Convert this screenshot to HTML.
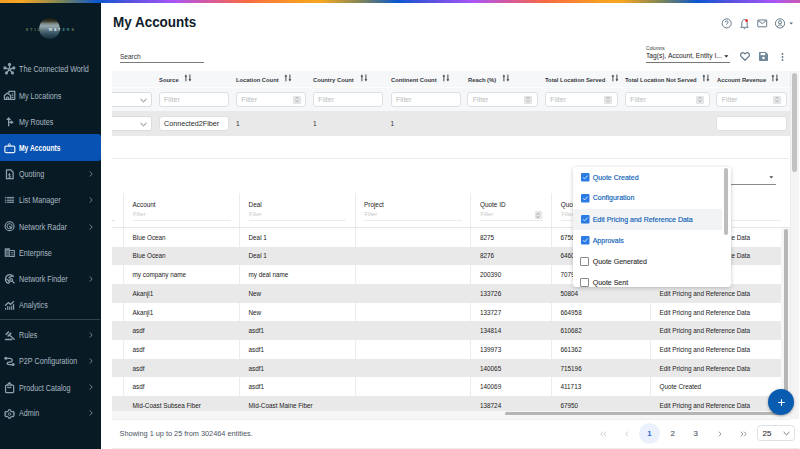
<!DOCTYPE html>
<html><head><meta charset="utf-8">
<style>
*{box-sizing:border-box;margin:0;padding:0}
html,body{width:800px;height:449px;overflow:hidden;background:#fff;font-family:"Liberation Sans",sans-serif;position:relative}
.a{position:absolute}
.t{position:absolute;white-space:nowrap}
svg{display:block;overflow:visible}
#topbar{left:0;top:0;width:800px;height:3px;background:repeating-linear-gradient(90deg,#f79e20 0px,#f5a623 22px,#7a8458 62px,#0b57cf 97px,#5a52e0 132px,#a855f7 172px,#d65a9c 210px,#f76a44 245px,#fb8c2c 282px,#f79e20 300px)}
#side{left:0;top:3px;width:101px;height:446px;background:#081b25}
.nav{position:absolute;left:0;width:101px;height:26.4px;color:#a9b8c2;font-size:8.4px;line-height:26.4px}
.nav .lbl{position:absolute;left:19.2px;top:0.7px;white-space:nowrap;transform:scaleX(0.858);transform-origin:0 50%}
.nav .ic{position:absolute;left:0;width:20px;height:20px;color:#8ca1ae}
.nav .chev{position:absolute;left:88.8px;top:10.4px;width:4px;height:6px;color:#8a9ba6}
.nav.act{background:#0752b2;border-radius:0 3px 3px 0;color:#fff}
.nav.act .ic{color:#e8eef6}
.nav.act .lbl{font-weight:700;transform:scaleX(0.80)}
</style></head><body>
<div id="side" class="a">
<div class="a" style="left:38.8px;top:14.9px;width:21px;height:21px;border-radius:50%;background:linear-gradient(180deg,#15190f 0%,#3a3726 15%,#76827e 26%,#96a8b0 37%,#7a8f99 50%,#4a6573 64%,#2b4654 82%,#1a3240 100%)"></div>
<div class="a" style="left:25.8px;top:24.6px;width:60px;font-size:3.6px;line-height:5px;letter-spacing:2.0px;color:#6f7b52;white-space:nowrap;font-weight:700">STILL <span style="color:#dce6ea">WAT</span><span style="color:#3f8f94">ER</span><span style="color:#7b8458">S</span></div>
<div class="nav" style="top:52.8px"><svg class="ic" style="top:4.20px" width="20" height="20" viewBox="0 0 449 449"><g stroke="currentColor" stroke-width="30" fill="none"><path d="M213 210L213 100M213 210L110 178M213 210L310 178M213 210L145 290M213 210L280 290"/></g><g fill="currentColor"><circle cx="213" cy="100" r="36"/><circle cx="110" cy="178" r="36"/><circle cx="310" cy="178" r="36"/><circle cx="145" cy="290" r="36"/><circle cx="280" cy="290" r="36"/><circle cx="213" cy="210" r="30"/></g><circle cx="213" cy="210" r="11" fill="#081b25"/></svg><span class="lbl">The Connected World</span></div>
<div class="nav" style="top:79.4px"><svg class="ic" style="top:3.60px" width="20" height="20" viewBox="0 0 449 449"><g stroke="currentColor" stroke-width="28" fill="none" stroke-linejoin="round"><path d="M98 300V215L168 158L238 215V300Z"/><path d="M200 160V122H332V300H238"/><path d="M145 300V262C145 245 192 245 192 262V300"/><path d="M262 178H300M262 218H300M262 258H300" stroke-width="24"/></g></svg><span class="lbl">My Locations</span></div>
<div class="nav" style="top:105.2px"><svg class="ic" style="top:3.80px" width="20" height="20" viewBox="0 0 449 449"><g fill="currentColor"><path d="M180 320V170H210V320Z"/><path d="M138 182L195 112L252 182Z"/><path d="M205 215H245V185L308 230L245 275V245H205Z"/></g></svg><span class="lbl">My Routes</span></div>
<div class="nav act" style="top:131.4px"><svg class="ic" style="top:3.60px" width="20" height="20" viewBox="0 0 449 449"><g stroke="currentColor" fill="none"><rect x="110" y="182" width="222" height="146" rx="26" stroke-width="28"/><circle cx="210" cy="152" r="24" stroke-width="22"/><path d="M165 250V290M245 240L270 270" stroke-width="14" opacity="0.4"/></g></svg><span class="lbl">My Accounts</span></div>
<div class="nav" style="top:157.8px"><svg class="ic" style="top:3.20px" width="20" height="20" viewBox="0 0 449 449"><g stroke="currentColor" fill="none" stroke-width="28" stroke-linejoin="round"><path d="M145 130H240L295 185V330H145Z"/><path d="M240 245C232 228 222 222 210 222C195 222 188 232 188 244C188 270 240 258 240 282C240 296 228 304 212 304C200 304 190 298 185 288M213 205V318" stroke-width="18"/></g></svg><span class="lbl">Quoting</span><svg class="chev" viewBox="0 0 4 6" fill="none" stroke="currentColor" stroke-width="0.8"><path d="M0.8 0.5L3.2 3L0.8 5.5"/></svg></div>
<div class="nav" style="top:183.8px"><svg class="ic" style="top:3.20px" width="20" height="20" viewBox="0 0 449 449"><g fill="currentColor"><rect x="110" y="155" width="32" height="22"/><rect x="158" y="155" width="158" height="22"/><rect x="110" y="190" width="32" height="22" opacity="0.8"/><rect x="158" y="190" width="158" height="22" opacity="0.8"/><rect x="110" y="225" width="32" height="22" opacity="0.8"/><rect x="158" y="225" width="158" height="22" opacity="0.8"/><rect x="110" y="262" width="32" height="26"/><rect x="158" y="262" width="158" height="26"/></g></svg><span class="lbl">List Manager</span><svg class="chev" viewBox="0 0 4 6" fill="none" stroke="currentColor" stroke-width="0.8"><path d="M0.8 0.5L3.2 3L0.8 5.5"/></svg></div>
<div class="nav" style="top:210.2px"><svg class="ic" style="top:2.80px" width="20" height="20" viewBox="0 0 449 449"><g stroke="currentColor" fill="none"><circle cx="215" cy="230" r="100" stroke-width="26"/><circle cx="215" cy="230" r="58" stroke-width="22"/><path d="M215 230L262 275" stroke-width="26"/></g><circle cx="213" cy="232" r="14" fill="currentColor"/></svg><span class="lbl">Network Radar</span><svg class="chev" viewBox="0 0 4 6" fill="none" stroke="currentColor" stroke-width="0.8"><path d="M0.8 0.5L3.2 3L0.8 5.5"/></svg></div>
<div class="nav" style="top:236.3px"><svg class="ic" style="top:2.70px" width="20" height="20" viewBox="0 0 449 449"><g fill="currentColor"><path d="M105 140H225V335H105Z" opacity="0.85"/></g><g stroke="#081b25" stroke-width="14"><path d="M135 210H205M135 250H205M135 290H205"/></g><g stroke="currentColor" stroke-width="24" fill="none"><path d="M225 190H322V325H225"/><path d="M240 240H300M240 290H300" stroke-width="18"/></g></svg><span class="lbl">Enterprise</span></div>
<div class="nav" style="top:262.2px"><svg class="ic" style="top:2.80px" width="20" height="20" viewBox="0 0 449 449"><g stroke="currentColor" fill="none" stroke-width="28" stroke-linecap="round"><path d="M300 190A100 100 0 1 0 190 345"/><path d="M145 250C180 260 205 290 210 330M200 220C230 190 260 175 290 185"/><circle cx="250" cy="268" r="32"/><path d="M275 295L318 335"/></g></svg><span class="lbl">Network Finder</span><svg class="chev" viewBox="0 0 4 6" fill="none" stroke="currentColor" stroke-width="0.8"><path d="M0.8 0.5L3.2 3L0.8 5.5"/></svg></div>
<div class="nav" style="top:288.6px"><svg class="ic" style="top:3.40px" width="20" height="20" viewBox="0 0 449 449"><g fill="currentColor"><rect x="112" y="290" width="26" height="42"/><rect x="160" y="250" width="26" height="82"/><rect x="205" y="258" width="26" height="74"/><rect x="250" y="240" width="26" height="92"/><rect x="292" y="205" width="26" height="127"/></g><path d="M112 240L190 170L235 212L312 140" stroke="currentColor" stroke-width="28" fill="none" stroke-linejoin="round"/></svg><span class="lbl">Analytics</span></div>
<div class="nav" style="top:318.4px"><svg class="ic" style="top:3.60px" width="20" height="20" viewBox="0 0 449 449"><g stroke="currentColor" fill="none" stroke-linecap="butt"><path d="M128 218L200 146" stroke-width="36"/><path d="M172 258L252 178" stroke-width="36"/><path d="M210 225L318 322" stroke-width="30" stroke-linecap="round"/><path d="M122 325H264" stroke-width="30" stroke-linecap="round"/></g></svg><span class="lbl">Rules</span><svg class="chev" viewBox="0 0 4 6" fill="none" stroke="currentColor" stroke-width="0.8"><path d="M0.8 0.5L3.2 3L0.8 5.5"/></svg></div>
<div class="nav" style="top:344.8px"><svg class="ic" style="top:4.20px" width="20" height="20" viewBox="0 0 449 449"><g fill="currentColor"><circle cx="132" cy="142" r="34"/><circle cx="295" cy="282" r="34"/></g><path d="M132 142H215C255 142 275 162 275 185C275 208 255 225 220 225H205C175 225 160 240 160 255C160 272 175 285 210 285H290" stroke="currentColor" stroke-width="28" fill="none"/></svg><span class="lbl">P2P Configuration</span><svg class="chev" viewBox="0 0 4 6" fill="none" stroke="currentColor" stroke-width="0.8"><path d="M0.8 0.5L3.2 3L0.8 5.5"/></svg></div>
<div class="nav" style="top:371.0px"><svg class="ic" style="top:4.00px" width="20" height="20" viewBox="0 0 449 449"><g stroke="currentColor" fill="none" stroke-width="28" stroke-linejoin="round"><rect x="125" y="160" width="182" height="168" rx="22"/><path d="M160 160L210 102L260 160"/><path d="M165 200C185 225 235 225 255 200" stroke-width="24"/></g></svg><span class="lbl">Product Catalog</span><svg class="chev" viewBox="0 0 4 6" fill="none" stroke="currentColor" stroke-width="0.8"><path d="M0.8 0.5L3.2 3L0.8 5.5"/></svg></div>
<div class="nav" style="top:396.8px"><svg class="ic" style="top:4.20px" width="20" height="20" viewBox="0 0 449 449"><g transform="translate(214 225) scale(0.86) translate(-214 -225)" stroke="currentColor" fill="none" stroke-width="30" stroke-linejoin="round"><path d="M190 118H238L250 150L283 168L318 158L340 200L316 225L340 252L318 292L283 282L250 300L238 332H190L178 300L145 282L110 292L88 252L112 225L88 200L110 158L145 168L178 150Z"/><circle cx="214" cy="225" r="34" stroke-width="22"/></g></svg><span class="lbl">Admin</span><svg class="chev" viewBox="0 0 4 6" fill="none" stroke="currentColor" stroke-width="0.8"><path d="M0.8 0.5L3.2 3L0.8 5.5"/></svg></div>
<div class="a" style="left:0;top:316px;width:100px;height:1px;background:#34444f"></div>
</div>
<div class="t" style="left:113px;top:8.40px;height:28.8px;line-height:28.8px;font-size:14.4px;color:#0f1d2b;font-weight:700;transform:scaleX(0.935);transform-origin:0 50%">My Accounts</div>
<svg class="a" style="left:0;top:0" width="800" height="40" viewBox="0 0 800 40" fill="none" stroke="#5d7385" stroke-width="0.95">
<circle cx="726.7" cy="23.4" r="4.55"/>
<path d="M725.3 22.2C725.3 21.3 725.9 20.8 726.7 20.8C727.5 20.8 728.1 21.3 728.1 22.1C728.1 23.1 726.8 23.2 726.8 24.3V24.6"/><circle cx="726.8" cy="26.1" r="0.45" fill="#5d7385" stroke="none"/>
<path d="M741.8 26.4V23C741.8 21 742.9 19.6 744.5 19.6C746.1 19.6 747.2 21 747.2 23V26.4L748.3 27.3H740.7Z"/>
<path d="M743.6 28.1C743.8 28.5 744.1 28.7 744.5 28.7C744.9 28.7 745.2 28.5 745.4 28.1" stroke-width="0.8"/>
<circle cx="746.6" cy="20.6" r="1.3" fill="#f01818" stroke="none"/>
<rect x="757.8" y="20" width="8.9" height="6.8" rx="0.5"/>
<path d="M758 20.4L762.25 23.6L766.5 20.4"/>
<circle cx="780" cy="23.4" r="4.6"/>
<circle cx="780" cy="22.3" r="1.55"/>
<path d="M777.2 26.8C777.8 25.6 778.8 25 780 25C781.2 25 782.2 25.6 782.8 26.8"/>
<path d="M789.3 22.4H793.1L791.2 24.4Z" fill="#5d7385" stroke="none"/>
</svg>
<div class="t" style="left:120px;top:50.40px;height:13.6px;line-height:13.6px;font-size:6.8px;color:#333;font-weight:400;transform:scaleX(0.96);transform-origin:0 50%">Search</div>
<div class="a" style="left:120px;top:61.5px;width:84px;height:1px;background:#7a7a7a"></div>
<div class="t" style="left:646px;top:44.10px;height:9.4px;line-height:9.4px;font-size:4.7px;color:#333;font-weight:400;">Columns</div>
<div class="t" style="left:646px;top:48.90px;height:13.4px;line-height:13.4px;font-size:6.7px;color:#222;font-weight:400;">Tag(s), Account, Entity I...</div>
<svg class="a" style="left:724px;top:54.5px" width="5" height="3" viewBox="0 0 5 3"><path d="M0.2 0.2H4.4L2.3 2.6Z" fill="#222"/></svg>
<div class="a" style="left:646px;top:61.5px;width:84px;height:1px;background:#777"></div>
<svg class="a" style="left:739.5px;top:51.5px" width="10" height="9" viewBox="0 0 10 9" fill="none" stroke="#5d7385" stroke-width="1.2"><path d="M5 8.2L1.3 4.6C0.3 3.6 0.4 2 1.4 1.2C2.4 0.4 3.9 0.6 5 1.9C6.1 0.6 7.6 0.4 8.6 1.2C9.6 2 9.7 3.6 8.7 4.6Z"/></svg>
<svg class="a" style="left:759px;top:52.3px" width="9" height="9" viewBox="0 0 9 9"><path d="M0 1C0 0.4 0.4 0 1 0H6.7L9 2.3V8C9 8.6 8.6 9 8 9H1C0.4 9 0 8.6 0 8Z" fill="#6e8799"/><rect x="1.6" y="1" width="4.6" height="2.2" fill="#fff"/><circle cx="4.5" cy="6" r="1.3" fill="#fff"/></svg>
<svg class="a" style="left:781px;top:52.5px" width="3" height="8" viewBox="0 0 3 8" fill="#5d7385"><circle cx="1.5" cy="1" r="0.9"/><circle cx="1.5" cy="4" r="0.9"/><circle cx="1.5" cy="7" r="0.9"/></svg>
<div class="a" style="left:112px;top:71px;width:678px;height:40px;background:#f6f7f9"></div>
<div class="a" style="left:112px;top:87.3px;width:678px;height:0.7px;background:#fdfdfe"></div>
<div class="a" style="left:112px;top:111.3px;width:678px;height:24.3px;background:#e9e9e9"></div>
<div class="a" style="left:112px;top:158px;width:677px;height:1px;background:#ebebeb"></div>
<div class="t" style="left:159px;top:73.90px;height:12.0px;line-height:12.0px;font-size:6.0px;color:#363a41;font-weight:700;transform:scaleX(0.97);transform-origin:0 50%">Source</div>
<svg class="a" style="left:184px;top:73.8px" width="8" height="8" viewBox="0 0 8 8"><path d="M1.9 2V7.3M5.9 0.5V5.8" stroke="#3a3d42" stroke-width="0.95"/><path d="M0.5 2.6L1.9 0.4L3.3 2.6ZM4.5 5.2L5.9 7.4L7.3 5.2Z" fill="#3a3d42"/></svg>
<div class="t" style="left:236px;top:73.90px;height:12.0px;line-height:12.0px;font-size:6.0px;color:#363a41;font-weight:700;transform:scaleX(0.97);transform-origin:0 50%">Location Count</div>
<svg class="a" style="left:284px;top:73.8px" width="8" height="8" viewBox="0 0 8 8"><path d="M1.9 2V7.3M5.9 0.5V5.8" stroke="#3a3d42" stroke-width="0.95"/><path d="M0.5 2.6L1.9 0.4L3.3 2.6ZM4.5 5.2L5.9 7.4L7.3 5.2Z" fill="#3a3d42"/></svg>
<div class="t" style="left:313px;top:73.90px;height:12.0px;line-height:12.0px;font-size:6.0px;color:#363a41;font-weight:700;transform:scaleX(0.97);transform-origin:0 50%">Country Count</div>
<svg class="a" style="left:359.7px;top:73.8px" width="8" height="8" viewBox="0 0 8 8"><path d="M1.9 2V7.3M5.9 0.5V5.8" stroke="#3a3d42" stroke-width="0.95"/><path d="M0.5 2.6L1.9 0.4L3.3 2.6ZM4.5 5.2L5.9 7.4L7.3 5.2Z" fill="#3a3d42"/></svg>
<div class="t" style="left:390.6px;top:73.90px;height:12.0px;line-height:12.0px;font-size:6.0px;color:#363a41;font-weight:700;transform:scaleX(0.97);transform-origin:0 50%">Continent Count</div>
<svg class="a" style="left:442px;top:73.8px" width="8" height="8" viewBox="0 0 8 8"><path d="M1.9 2V7.3M5.9 0.5V5.8" stroke="#3a3d42" stroke-width="0.95"/><path d="M0.5 2.6L1.9 0.4L3.3 2.6ZM4.5 5.2L5.9 7.4L7.3 5.2Z" fill="#3a3d42"/></svg>
<div class="t" style="left:468px;top:73.90px;height:12.0px;line-height:12.0px;font-size:6.0px;color:#363a41;font-weight:700;transform:scaleX(0.97);transform-origin:0 50%">Reach (%)</div>
<svg class="a" style="left:502.3px;top:73.8px" width="8" height="8" viewBox="0 0 8 8"><path d="M1.9 2V7.3M5.9 0.5V5.8" stroke="#3a3d42" stroke-width="0.95"/><path d="M0.5 2.6L1.9 0.4L3.3 2.6ZM4.5 5.2L5.9 7.4L7.3 5.2Z" fill="#3a3d42"/></svg>
<div class="t" style="left:545px;top:73.90px;height:12.0px;line-height:12.0px;font-size:6.0px;color:#363a41;font-weight:700;transform:scaleX(0.97);transform-origin:0 50%">Total Location Served</div>
<svg class="a" style="left:611px;top:73.8px" width="8" height="8" viewBox="0 0 8 8"><path d="M1.9 2V7.3M5.9 0.5V5.8" stroke="#3a3d42" stroke-width="0.95"/><path d="M0.5 2.6L1.9 0.4L3.3 2.6ZM4.5 5.2L5.9 7.4L7.3 5.2Z" fill="#3a3d42"/></svg>
<div class="t" style="left:625px;top:73.90px;height:12.0px;line-height:12.0px;font-size:6.0px;color:#363a41;font-weight:700;transform:scaleX(0.97);transform-origin:0 50%">Total Location Not Served</div>
<svg class="a" style="left:702px;top:73.8px" width="8" height="8" viewBox="0 0 8 8"><path d="M1.9 2V7.3M5.9 0.5V5.8" stroke="#3a3d42" stroke-width="0.95"/><path d="M0.5 2.6L1.9 0.4L3.3 2.6ZM4.5 5.2L5.9 7.4L7.3 5.2Z" fill="#3a3d42"/></svg>
<div class="t" style="left:716.8px;top:73.90px;height:12.0px;line-height:12.0px;font-size:6.0px;color:#363a41;font-weight:700;transform:scaleX(0.97);transform-origin:0 50%">Account Revenue</div>
<svg class="a" style="left:770.5px;top:73.8px" width="8" height="8" viewBox="0 0 8 8"><path d="M1.9 2V7.3M5.9 0.5V5.8" stroke="#3a3d42" stroke-width="0.95"/><path d="M0.5 2.6L1.9 0.4L3.3 2.6ZM4.5 5.2L5.9 7.4L7.3 5.2Z" fill="#3a3d42"/></svg>
<div class="a" style="left:104px;top:92.1px;width:47.5px;height:15.4px;background:#fff;border:0.8px solid #d9dcdf;border-radius:3px"></div>
<svg class="a" style="left:139.5px;top:97.5px" width="7" height="5" viewBox="0 0 7 5" fill="none" stroke="#555" stroke-width="0.8"><path d="M0.6 1L3.5 3.8L6.4 1"/></svg>
<div class="a" style="left:158.7px;top:92.1px;width:70px;height:15.4px;background:#fff;border:0.8px solid #dddfe2;border-radius:3px"></div><div class="t" style="left:164.0px;top:93.00px;height:14.2px;line-height:14.2px;font-size:7.1px;color:#b9bcbf;font-weight:400;">Filter</div>
<div class="a" style="left:236px;top:92.1px;width:70px;height:15.4px;background:#fff;border:0.8px solid #dddfe2;border-radius:3px"></div><div class="t" style="left:241.3px;top:93.00px;height:14.2px;line-height:14.2px;font-size:7.1px;color:#b9bcbf;font-weight:400;">Filter</div><div class="a" style="left:292.5px;top:95.8px;width:8px;height:8px;background:#e3e4e6;border-radius:1px"></div><svg class="a" style="left:293.5px;top:96.3px" width="6" height="7" viewBox="0 0 6 7" fill="none" stroke="#8a8d91" stroke-width="0.6"><path d="M1.5 2.6L3 1.2L4.5 2.6M1.5 4.4L3 5.8L4.5 4.4"/></svg>
<div class="a" style="left:313px;top:92.1px;width:70px;height:15.4px;background:#fff;border:0.8px solid #dddfe2;border-radius:3px"></div><div class="t" style="left:318.3px;top:93.00px;height:14.2px;line-height:14.2px;font-size:7.1px;color:#b9bcbf;font-weight:400;">Filter</div>
<div class="a" style="left:390.6px;top:92.1px;width:70px;height:15.4px;background:#fff;border:0.8px solid #dddfe2;border-radius:3px"></div><div class="t" style="left:395.90000000000003px;top:93.00px;height:14.2px;line-height:14.2px;font-size:7.1px;color:#b9bcbf;font-weight:400;">Filter</div>
<div class="a" style="left:467.4px;top:92.1px;width:70.3px;height:15.4px;background:#fff;border:0.8px solid #dddfe2;border-radius:3px"></div><div class="t" style="left:472.7px;top:93.00px;height:14.2px;line-height:14.2px;font-size:7.1px;color:#b9bcbf;font-weight:400;">Filter</div><div class="a" style="left:524.1999999999999px;top:95.8px;width:8px;height:8px;background:#e3e4e6;border-radius:1px"></div><svg class="a" style="left:525.1999999999999px;top:96.3px" width="6" height="7" viewBox="0 0 6 7" fill="none" stroke="#8a8d91" stroke-width="0.6"><path d="M1.5 2.6L3 1.2L4.5 2.6M1.5 4.4L3 5.8L4.5 4.4"/></svg>
<div class="a" style="left:545px;top:92.1px;width:72.7px;height:15.4px;background:#fff;border:0.8px solid #dddfe2;border-radius:3px"></div><div class="t" style="left:550.3px;top:93.00px;height:14.2px;line-height:14.2px;font-size:7.1px;color:#b9bcbf;font-weight:400;">Filter</div><div class="a" style="left:604.2px;top:95.8px;width:8px;height:8px;background:#e3e4e6;border-radius:1px"></div><svg class="a" style="left:605.2px;top:96.3px" width="6" height="7" viewBox="0 0 6 7" fill="none" stroke="#8a8d91" stroke-width="0.6"><path d="M1.5 2.6L3 1.2L4.5 2.6M1.5 4.4L3 5.8L4.5 4.4"/></svg>
<div class="a" style="left:625px;top:92.1px;width:84.6px;height:15.4px;background:#fff;border:0.8px solid #dddfe2;border-radius:3px"></div><div class="t" style="left:630.3px;top:93.00px;height:14.2px;line-height:14.2px;font-size:7.1px;color:#b9bcbf;font-weight:400;">Filter</div><div class="a" style="left:696.1px;top:95.8px;width:8px;height:8px;background:#e3e4e6;border-radius:1px"></div><svg class="a" style="left:697.1px;top:96.3px" width="6" height="7" viewBox="0 0 6 7" fill="none" stroke="#8a8d91" stroke-width="0.6"><path d="M1.5 2.6L3 1.2L4.5 2.6M1.5 4.4L3 5.8L4.5 4.4"/></svg>
<div class="a" style="left:716.4px;top:92.1px;width:70.3px;height:15.4px;background:#fff;border:0.8px solid #dddfe2;border-radius:3px"></div><div class="t" style="left:721.6999999999999px;top:93.00px;height:14.2px;line-height:14.2px;font-size:7.1px;color:#b9bcbf;font-weight:400;">Filter</div><div class="a" style="left:773.1999999999999px;top:95.8px;width:8px;height:8px;background:#e3e4e6;border-radius:1px"></div><svg class="a" style="left:774.1999999999999px;top:96.3px" width="6" height="7" viewBox="0 0 6 7" fill="none" stroke="#8a8d91" stroke-width="0.6"><path d="M1.5 2.6L3 1.2L4.5 2.6M1.5 4.4L3 5.8L4.5 4.4"/></svg>
<div class="a" style="left:104px;top:116.2px;width:47.5px;height:15.1px;background:#fff;border:0.8px solid #d9dcdf;border-radius:3px"></div>
<svg class="a" style="left:139.5px;top:121.5px" width="7" height="5" viewBox="0 0 7 5" fill="none" stroke="#555" stroke-width="0.8"><path d="M0.6 1L3.5 3.8L6.4 1"/></svg>
<div class="a" style="left:158.7px;top:116.2px;width:70px;height:15.1px;background:#fff;border:0.8px solid #dddfe2;border-radius:3px"></div><div class="t" style="left:164.0px;top:116.85px;height:14.4px;line-height:14.4px;font-size:7.2px;color:#2a2a2a;font-weight:400;">Connected2Fiber</div>
<div class="t" style="left:236px;top:116.90px;height:13.2px;line-height:13.2px;font-size:6.6px;color:#333;font-weight:400;">1</div>
<div class="t" style="left:313px;top:116.90px;height:13.2px;line-height:13.2px;font-size:6.6px;color:#333;font-weight:400;">1</div>
<div class="t" style="left:390.6px;top:116.90px;height:13.2px;line-height:13.2px;font-size:6.6px;color:#333;font-weight:400;">1</div>
<div class="a" style="left:716.4px;top:116.4px;width:70.3px;height:15.1px;background:#fff;border:0.8px solid #dddfe2;border-radius:3px"></div>
<div class="a" style="left:101px;top:60px;width:11px;height:100px;background:#fff"></div>
<div class="a" style="left:575px;top:184px;width:200.6px;height:0.8px;background:#8a8a8a"></div>
<svg class="a" style="left:768.5px;top:175.8px" width="5" height="3" viewBox="0 0 5 3"><path d="M0.2 0.2H4.4L2.3 2.6Z" fill="#555"/></svg>
<div class="a" style="left:123.2px;top:192.5px;width:0.7px;height:218px;background:#ebebeb"></div>
<div class="a" style="left:239.3px;top:192.5px;width:0.7px;height:218px;background:#ebebeb"></div>
<div class="a" style="left:354.8px;top:192.5px;width:0.7px;height:218px;background:#ebebeb"></div>
<div class="a" style="left:470.3px;top:192.5px;width:0.7px;height:218px;background:#ebebeb"></div>
<div class="a" style="left:551.4px;top:192.5px;width:0.7px;height:218px;background:#ebebeb"></div>
<div class="a" style="left:649.8px;top:192.5px;width:0.7px;height:218px;background:#ebebeb"></div>
<div class="t" style="left:132.5px;top:199.40px;height:12.8px;line-height:12.8px;font-size:6.4px;color:#222;font-weight:400;">Account</div>
<div class="t" style="left:133.0px;top:209.30px;height:11.4px;line-height:11.4px;font-size:5.7px;color:#c8c8c8;font-weight:400;">Filter</div>
<div class="a" style="left:132.5px;top:219.6px;width:98.1px;height:0.8px;background:#ececec"></div>
<div class="t" style="left:248.6px;top:199.40px;height:12.8px;line-height:12.8px;font-size:6.4px;color:#222;font-weight:400;">Deal</div>
<div class="t" style="left:249.1px;top:209.30px;height:11.4px;line-height:11.4px;font-size:5.7px;color:#c8c8c8;font-weight:400;">Filter</div>
<div class="a" style="left:248.6px;top:219.6px;width:97.4px;height:0.8px;background:#ececec"></div>
<div class="t" style="left:364px;top:199.40px;height:12.8px;line-height:12.8px;font-size:6.4px;color:#222;font-weight:400;">Project</div>
<div class="t" style="left:364.5px;top:209.30px;height:11.4px;line-height:11.4px;font-size:5.7px;color:#c8c8c8;font-weight:400;">Filter</div>
<div class="a" style="left:364px;top:219.6px;width:98px;height:0.8px;background:#ececec"></div>
<div class="t" style="left:480px;top:199.40px;height:12.8px;line-height:12.8px;font-size:6.4px;color:#222;font-weight:400;">Quote ID</div>
<div class="t" style="left:480.5px;top:209.30px;height:11.4px;line-height:11.4px;font-size:5.7px;color:#c8c8c8;font-weight:400;">Filter</div>
<div class="a" style="left:480px;top:219.6px;width:62.700000000000045px;height:0.8px;background:#ececec"></div>
<div class="t" style="left:560.7px;top:199.40px;height:12.8px;line-height:12.8px;font-size:6.4px;color:#222;font-weight:400;">Quote #</div>
<div class="t" style="left:561.2px;top:209.30px;height:11.4px;line-height:11.4px;font-size:5.7px;color:#c8c8c8;font-weight:400;">Filter</div>
<div class="a" style="left:560.7px;top:219.6px;width:80.29999999999995px;height:0.8px;background:#ececec"></div>
<div class="t" style="left:659px;top:199.40px;height:12.8px;line-height:12.8px;font-size:6.4px;color:#222;font-weight:400;">Status</div>
<div class="t" style="left:659.5px;top:209.30px;height:11.4px;line-height:11.4px;font-size:5.7px;color:#c8c8c8;font-weight:400;">Filter</div>
<div class="a" style="left:659px;top:219.6px;width:122px;height:0.8px;background:#ececec"></div>
<div class="a" style="left:112px;top:219.6px;width:3px;height:0.8px;background:#e0e0e0"></div>
<div class="a" style="left:534.5px;top:211px;width:7px;height:8px;background:#e6e6e6;border-radius:1px"></div>
<svg class="a" style="left:535px;top:211.5px" width="6" height="7" viewBox="0 0 6 7" fill="none" stroke="#777" stroke-width="0.6"><path d="M1.5 2.6L3 1.2L4.5 2.6M1.5 4.4L3 5.8L4.5 4.4"/></svg>
<div class="a" style="left:112px;top:227.3px;width:678px;height:0.8px;background:#e6e6e6"></div>
<div class="t" style="left:132.5px;top:231.70px;height:12.7px;line-height:12.7px;font-size:6.35px;color:#222;font-weight:400;">Blue Ocean</div>
<div class="t" style="left:248.5px;top:231.70px;height:12.7px;line-height:12.7px;font-size:6.35px;color:#222;font-weight:400;">Deal 1</div>
<div class="t" style="left:480px;top:231.70px;height:12.7px;line-height:12.7px;font-size:6.35px;color:#222;font-weight:400;">8275</div>
<div class="t" style="left:560.5px;top:231.70px;height:12.7px;line-height:12.7px;font-size:6.35px;color:#222;font-weight:400;">675604</div>
<div class="t" style="left:659.5px;top:231.70px;height:12.7px;line-height:12.7px;font-size:6.35px;color:#222;font-weight:400;">Edit Pricing and Reference Data</div>
<div class="a" style="left:112px;top:246.5px;width:669px;height:18.7px;background:#e9e9e9"></div>
<div class="t" style="left:132.5px;top:250.40px;height:12.7px;line-height:12.7px;font-size:6.35px;color:#222;font-weight:400;">Blue Ocean</div>
<div class="t" style="left:248.5px;top:250.40px;height:12.7px;line-height:12.7px;font-size:6.35px;color:#222;font-weight:400;">Deal 1</div>
<div class="t" style="left:480px;top:250.40px;height:12.7px;line-height:12.7px;font-size:6.35px;color:#222;font-weight:400;">8276</div>
<div class="t" style="left:560.5px;top:250.40px;height:12.7px;line-height:12.7px;font-size:6.35px;color:#222;font-weight:400;">646012</div>
<div class="t" style="left:659.5px;top:250.40px;height:12.7px;line-height:12.7px;font-size:6.35px;color:#222;font-weight:400;">Edit Pricing and Reference Data</div>
<div class="t" style="left:132.5px;top:269.10px;height:12.7px;line-height:12.7px;font-size:6.35px;color:#222;font-weight:400;">my company name</div>
<div class="t" style="left:248.5px;top:269.10px;height:12.7px;line-height:12.7px;font-size:6.35px;color:#222;font-weight:400;">my deal name</div>
<div class="t" style="left:480px;top:269.10px;height:12.7px;line-height:12.7px;font-size:6.35px;color:#222;font-weight:400;">200390</div>
<div class="t" style="left:560.5px;top:269.10px;height:12.7px;line-height:12.7px;font-size:6.35px;color:#222;font-weight:400;">707911</div>
<div class="a" style="left:112px;top:283.9px;width:669px;height:18.7px;background:#e9e9e9"></div>
<div class="t" style="left:132.5px;top:287.80px;height:12.7px;line-height:12.7px;font-size:6.35px;color:#222;font-weight:400;">Akanji1</div>
<div class="t" style="left:248.5px;top:287.80px;height:12.7px;line-height:12.7px;font-size:6.35px;color:#222;font-weight:400;">New</div>
<div class="t" style="left:480px;top:287.80px;height:12.7px;line-height:12.7px;font-size:6.35px;color:#222;font-weight:400;">133726</div>
<div class="t" style="left:560.5px;top:287.80px;height:12.7px;line-height:12.7px;font-size:6.35px;color:#222;font-weight:400;">50804</div>
<div class="t" style="left:659.5px;top:287.80px;height:12.7px;line-height:12.7px;font-size:6.35px;color:#222;font-weight:400;">Edit Pricing and Reference Data</div>
<div class="t" style="left:132.5px;top:306.50px;height:12.7px;line-height:12.7px;font-size:6.35px;color:#222;font-weight:400;">Akanji1</div>
<div class="t" style="left:248.5px;top:306.50px;height:12.7px;line-height:12.7px;font-size:6.35px;color:#222;font-weight:400;">New</div>
<div class="t" style="left:480px;top:306.50px;height:12.7px;line-height:12.7px;font-size:6.35px;color:#222;font-weight:400;">133727</div>
<div class="t" style="left:560.5px;top:306.50px;height:12.7px;line-height:12.7px;font-size:6.35px;color:#222;font-weight:400;">664958</div>
<div class="t" style="left:659.5px;top:306.50px;height:12.7px;line-height:12.7px;font-size:6.35px;color:#222;font-weight:400;">Edit Pricing and Reference Data</div>
<div class="a" style="left:112px;top:321.3px;width:669px;height:18.7px;background:#e9e9e9"></div>
<div class="t" style="left:132.5px;top:325.20px;height:12.7px;line-height:12.7px;font-size:6.35px;color:#222;font-weight:400;">asdf</div>
<div class="t" style="left:248.5px;top:325.20px;height:12.7px;line-height:12.7px;font-size:6.35px;color:#222;font-weight:400;">asdf1</div>
<div class="t" style="left:480px;top:325.20px;height:12.7px;line-height:12.7px;font-size:6.35px;color:#222;font-weight:400;">134814</div>
<div class="t" style="left:560.5px;top:325.20px;height:12.7px;line-height:12.7px;font-size:6.35px;color:#222;font-weight:400;">610682</div>
<div class="t" style="left:659.5px;top:325.20px;height:12.7px;line-height:12.7px;font-size:6.35px;color:#222;font-weight:400;">Edit Pricing and Reference Data</div>
<div class="t" style="left:132.5px;top:343.90px;height:12.7px;line-height:12.7px;font-size:6.35px;color:#222;font-weight:400;">asdf</div>
<div class="t" style="left:248.5px;top:343.90px;height:12.7px;line-height:12.7px;font-size:6.35px;color:#222;font-weight:400;">asdf1</div>
<div class="t" style="left:480px;top:343.90px;height:12.7px;line-height:12.7px;font-size:6.35px;color:#222;font-weight:400;">139973</div>
<div class="t" style="left:560.5px;top:343.90px;height:12.7px;line-height:12.7px;font-size:6.35px;color:#222;font-weight:400;">661362</div>
<div class="t" style="left:659.5px;top:343.90px;height:12.7px;line-height:12.7px;font-size:6.35px;color:#222;font-weight:400;">Edit Pricing and Reference Data</div>
<div class="a" style="left:112px;top:358.7px;width:669px;height:18.7px;background:#e9e9e9"></div>
<div class="t" style="left:132.5px;top:362.60px;height:12.7px;line-height:12.7px;font-size:6.35px;color:#222;font-weight:400;">asdf</div>
<div class="t" style="left:248.5px;top:362.60px;height:12.7px;line-height:12.7px;font-size:6.35px;color:#222;font-weight:400;">asdf1</div>
<div class="t" style="left:480px;top:362.60px;height:12.7px;line-height:12.7px;font-size:6.35px;color:#222;font-weight:400;">140065</div>
<div class="t" style="left:560.5px;top:362.60px;height:12.7px;line-height:12.7px;font-size:6.35px;color:#222;font-weight:400;">715196</div>
<div class="t" style="left:659.5px;top:362.60px;height:12.7px;line-height:12.7px;font-size:6.35px;color:#222;font-weight:400;">Edit Pricing and Reference Data</div>
<div class="t" style="left:132.5px;top:381.30px;height:12.7px;line-height:12.7px;font-size:6.35px;color:#222;font-weight:400;">asdf</div>
<div class="t" style="left:248.5px;top:381.30px;height:12.7px;line-height:12.7px;font-size:6.35px;color:#222;font-weight:400;">asdf1</div>
<div class="t" style="left:480px;top:381.30px;height:12.7px;line-height:12.7px;font-size:6.35px;color:#222;font-weight:400;">140069</div>
<div class="t" style="left:560.5px;top:381.30px;height:12.7px;line-height:12.7px;font-size:6.35px;color:#222;font-weight:400;">411713</div>
<div class="t" style="left:659.5px;top:381.30px;height:12.7px;line-height:12.7px;font-size:6.35px;color:#222;font-weight:400;">Quote Created</div>
<div class="a" style="left:112px;top:396.1px;width:669px;height:14.6px;background:#e9e9e9"></div>
<div class="t" style="left:132.5px;top:400.00px;height:12.7px;line-height:12.7px;font-size:6.35px;color:#222;font-weight:400;">Mid-Coast Subsea Fiber</div>
<div class="t" style="left:248.5px;top:400.00px;height:12.7px;line-height:12.7px;font-size:6.35px;color:#222;font-weight:400;">Mid-Coast Maine Fiber</div>
<div class="t" style="left:480px;top:400.00px;height:12.7px;line-height:12.7px;font-size:6.35px;color:#222;font-weight:400;">138724</div>
<div class="t" style="left:560.5px;top:400.00px;height:12.7px;line-height:12.7px;font-size:6.35px;color:#222;font-weight:400;">67950</div>
<div class="t" style="left:659.5px;top:400.00px;height:12.7px;line-height:12.7px;font-size:6.35px;color:#222;font-weight:400;">Edit Pricing and Reference Data</div>
<div class="a" style="left:112px;top:410.7px;width:687px;height:8px;background:#f6f6f6"></div>
<div class="a" style="left:505px;top:411.5px;width:276px;height:3.5px;background:#b5b5b5;border-radius:2px"></div>
<div class="a" style="left:781px;top:227.8px;width:9px;height:191px;background:#f7f7f7"></div>
<div class="a" style="left:783.8px;top:228.5px;width:4.4px;height:185px;background:#b7b7b7;border-radius:2px"></div>
<div class="a" style="left:790px;top:71px;width:9px;height:347.5px;background:#f4f4f4;border-left:0.6px solid #ececec"></div>
<div class="a" style="left:792px;top:72.5px;width:5px;height:99.5px;background:#c2c2c2;border-radius:3px"></div>
<div class="a" style="left:112px;top:418.5px;width:678px;height:0.6px;background:#eeeeee"></div>
<div class="t" style="left:119.5px;top:427.46px;height:14.68px;line-height:14.68px;font-size:7.34px;color:#4a5463;font-weight:400;">Showing 1 up to 25 from 302464 entities.</div>
<div class="a" style="left:112px;top:447.6px;width:687px;height:1.4px;background:#ececec"></div>
<svg class="a" style="left:600px;top:430.5px" width="7" height="6" viewBox="0 0 7 6" fill="none" stroke="#b3b8c0" stroke-width="0.7"><path d="M3 0.6L0.8 3L3 5.4M6.2 0.6L4 3L6.2 5.4"/></svg>
<svg class="a" style="left:625px;top:430.5px" width="4" height="6" viewBox="0 0 4 6" fill="none" stroke="#b3b8c0" stroke-width="0.7"><path d="M3 0.6L0.8 3L3 5.4"/></svg>
<div class="a" style="left:639px;top:422.6px;width:21px;height:21px;border-radius:50%;background:#eaf1fd"></div>
<div class="t" style="left:647.3px;top:425.80px;height:15.6px;line-height:15.6px;font-size:7.8px;color:#3a66d0;font-weight:700;">1</div>
<div class="t" style="left:670.6px;top:425.70px;height:15.8px;line-height:15.8px;font-size:7.9px;color:#555d69;font-weight:400;-webkit-text-stroke:0.15px #555d69">2</div>
<div class="t" style="left:693.6px;top:425.70px;height:15.8px;line-height:15.8px;font-size:7.9px;color:#555d69;font-weight:400;-webkit-text-stroke:0.15px #555d69">3</div>
<svg class="a" style="left:717.5px;top:430.5px" width="4" height="6" viewBox="0 0 4 6" fill="none" stroke="#6b7280" stroke-width="0.7"><path d="M0.8 0.6L3 3L0.8 5.4"/></svg>
<svg class="a" style="left:740px;top:430.5px" width="7" height="6" viewBox="0 0 7 6" fill="none" stroke="#6b7280" stroke-width="0.7"><path d="M0.8 0.6L3 3L0.8 5.4M4 0.6L6.2 3L4 5.4"/></svg>
<div class="a" style="left:757.2px;top:425.2px;width:38px;height:16.3px;background:#fff;border:0.8px solid #dde0e4;border-radius:3.5px"></div>
<div class="t" style="left:762.5px;top:425.50px;height:16.0px;line-height:16.0px;font-size:8.0px;color:#333;font-weight:400;-webkit-text-stroke:0.12px #333">25</div>
<svg class="a" style="left:782.5px;top:431px" width="7" height="5" viewBox="0 0 7 5" fill="none" stroke="#555" stroke-width="0.8"><path d="M0.6 1L3.5 3.8L6.4 1"/></svg>
<div class="a" style="left:768px;top:389.4px;width:26px;height:26px;border-radius:50%;background:#0a5cb0;box-shadow:0 1px 3px rgba(0,0,0,0.35)"></div>
<svg class="a" style="left:776.5px;top:398px" width="9" height="9" viewBox="0 0 9 9" stroke="#fff" stroke-width="1.1"><path d="M4.5 1.2V7.8M1.2 4.5H7.8"/></svg>
<div class="a" style="left:573px;top:167px;width:157.5px;height:120px;background:#fff;border-radius:3px;box-shadow:0 1px 4px rgba(0,0,0,0.22);overflow:hidden">
<div class="a" style="left:0;top:42px;width:148.5px;height:20.5px;background:#f2f3f5"></div>
<svg class="a" style="left:7.5px;top:5.8px" width="8.5" height="8.5" viewBox="0 0 8.5 8.5"><rect x="0" y="0" width="8.5" height="8.5" rx="1" fill="#2a7be4"/><path d="M2 4.3L3.6 5.9L6.6 2.6" fill="none" stroke="#fff" stroke-width="0.8"/></svg>
<div class="t" style="left:19.7px;top:3.50px;height:14.0px;line-height:14.0px;font-size:7.0px;color:#0d5fb8;font-weight:400;-webkit-text-stroke:0.15px #0d5fb8">Quote Created</div>
<svg class="a" style="left:7.5px;top:26.6px" width="8.5" height="8.5" viewBox="0 0 8.5 8.5"><rect x="0" y="0" width="8.5" height="8.5" rx="1" fill="#2a7be4"/><path d="M2 4.3L3.6 5.9L6.6 2.6" fill="none" stroke="#fff" stroke-width="0.8"/></svg>
<div class="t" style="left:19.7px;top:24.30px;height:14.0px;line-height:14.0px;font-size:7.0px;color:#0d5fb8;font-weight:400;-webkit-text-stroke:0.15px #0d5fb8">Configuration</div>
<svg class="a" style="left:7.5px;top:48.0px" width="8.5" height="8.5" viewBox="0 0 8.5 8.5"><rect x="0" y="0" width="8.5" height="8.5" rx="1" fill="#2a7be4"/><path d="M2 4.3L3.6 5.9L6.6 2.6" fill="none" stroke="#fff" stroke-width="0.8"/></svg>
<div class="t" style="left:19.7px;top:45.70px;height:14.0px;line-height:14.0px;font-size:7.0px;color:#0d5fb8;font-weight:400;-webkit-text-stroke:0.15px #0d5fb8">Edit Pricing and Reference Data</div>
<svg class="a" style="left:7.5px;top:68.8px" width="8.5" height="8.5" viewBox="0 0 8.5 8.5"><rect x="0" y="0" width="8.5" height="8.5" rx="1" fill="#2a7be4"/><path d="M2 4.3L3.6 5.9L6.6 2.6" fill="none" stroke="#fff" stroke-width="0.8"/></svg>
<div class="t" style="left:19.7px;top:66.50px;height:14.0px;line-height:14.0px;font-size:7.0px;color:#0d5fb8;font-weight:400;-webkit-text-stroke:0.15px #0d5fb8">Approvals</div>
<div class="a" style="left:7.4px;top:90.4px;width:8.2px;height:8.2px;border:0.8px solid #8a8a8a;border-radius:1px"></div>
<div class="t" style="left:19.7px;top:87.50px;height:14.0px;line-height:14.0px;font-size:7.0px;color:#2a2a2a;font-weight:400;-webkit-text-stroke:0.1px #2a2a2a">Quote Generated</div>
<div class="a" style="left:7.4px;top:111.4px;width:8.2px;height:8.2px;border:0.8px solid #8a8a8a;border-radius:1px"></div>
<div class="t" style="left:19.7px;top:108.50px;height:14.0px;line-height:14.0px;font-size:7.0px;color:#2a2a2a;font-weight:400;-webkit-text-stroke:0.1px #2a2a2a">Quote Sent</div>
<div class="a" style="left:150.8px;top:1px;width:4.6px;height:67px;background:#bdbdbd;border-radius:2px"></div>
</div>
<div id="topbar" class="a"></div>
</body></html>
